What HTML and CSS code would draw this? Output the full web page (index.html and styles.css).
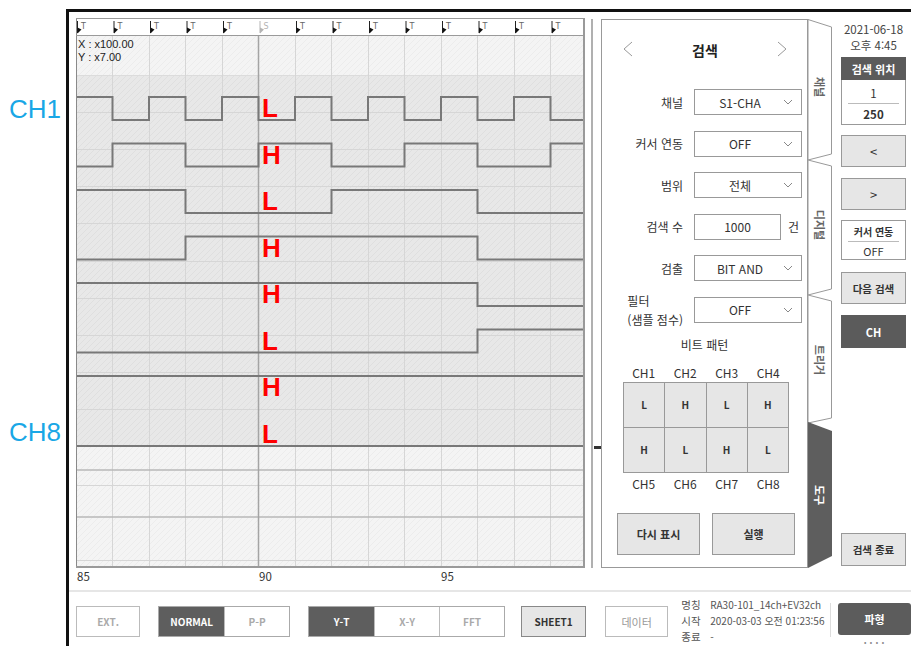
FILE: index.html
```html
<!DOCTYPE html>
<html lang="ko">
<head>
<meta charset="utf-8">
<title>검색</title>
<link rel="stylesheet" href="styles.css">
</head>
<body>
<div class="page">
  <div class="labels">
    <div class="ch-label">CH1</div>
    <div class="ch-label ch8">CH8</div>
  </div>
  <div class="device">
    <div class="main">
      <div class="chart">
        <svg class="chart-svg" width="509" height="572" viewBox="0 0 509 572">
          <defs>
            <pattern id="hd" width="6" height="6" patternUnits="userSpaceOnUse">
              <rect width="6" height="6" fill="#e8e8e8"/>
              <path d="M-1,1 L1,-1 M0,6 L6,0 M5,7 L7,5" stroke="#dfdfdf" stroke-width="1"/>
            </pattern>
            <pattern id="hl" width="6" height="6" patternUnits="userSpaceOnUse">
              <rect width="6" height="6" fill="#f4f4f4"/>
              <path d="M-1,1 L1,-1 M0,6 L6,0 M5,7 L7,5" stroke="#ececec" stroke-width="1"/>
            </pattern>
          </defs>
          <rect x="0" y="0" width="509" height="17" fill="#fff"/>
          <rect x="0" y="17" width="509" height="40" fill="url(#hl)"/>
          <rect x="0" y="57" width="509" height="372" fill="url(#hd)"/>
          <rect x="0" y="429" width="509" height="120" fill="url(#hl)"/>
          <path d="M0,57.5 H509" stroke="#dcdcdc" stroke-width="1"/>
          <g stroke="#d6d6d6" stroke-width="1">
            <path d="M36.5,17 V549 M73.5,17 V549 M109.5,17 V549 M146.5,17 V549 M219.5,17 V549 M255.5,17 V549 M292.5,17 V549 M328.5,17 V549 M365.5,17 V549 M401.5,17 V549 M438.5,17 V549 M474.5,17 V549"/>
            <path d="M0,94.5 H509 M0,131.5 H509 M0,168.5 H509 M0,205.5 H509 M0,243.5 H509 M0,280.5 H509 M0,317.5 H509 M0,354.5 H509 M0,391.5 H509 M0,467.5 H509 M0,542.5 H509"/>
          </g>
          <path d="M0,452 H509 M0,499 H509" stroke="#b8b8b8" stroke-width="1.5"/>
          <path d="M182.5,17 V549" stroke="#a4a4a4" stroke-width="1.5"/>
          <g class="markers">
            <g class="mk-on"><path d="M1.5,3 V15"/><polygon points="1.5,9.5 5.5,11.5 1.5,15.5"/><text x="5" y="10.5">T</text></g>
            <g class="mk-on"><path d="M38,3 V15"/><polygon points="38,9.5 42,11.5 38,15.5"/><text x="41.5" y="10.5">T</text></g>
            <g class="mk-on"><path d="M74.5,3 V15"/><polygon points="74.5,9.5 78.5,11.5 74.5,15.5"/><text x="78" y="10.5">T</text></g>
            <g class="mk-on"><path d="M111,3 V15"/><polygon points="111,9.5 115,11.5 111,15.5"/><text x="114.5" y="10.5">T</text></g>
            <g class="mk-on"><path d="M147.5,3 V15"/><polygon points="147.5,9.5 151.5,11.5 147.5,15.5"/><text x="151" y="10.5">T</text></g>
            <g class="mk-off"><path d="M184,3 V15"/><polygon points="184,9.5 188,11.5 184,15.5"/><text x="187.5" y="10.5">S</text></g>
            <g class="mk-on"><path d="M220.5,3 V15"/><polygon points="220.5,9.5 224.5,11.5 220.5,15.5"/><text x="224" y="10.5">T</text></g>
            <g class="mk-on"><path d="M257,3 V15"/><polygon points="257,9.5 261,11.5 257,15.5"/><text x="260.5" y="10.5">T</text></g>
            <g class="mk-on"><path d="M293.5,3 V15"/><polygon points="293.5,9.5 297.5,11.5 293.5,15.5"/><text x="297" y="10.5">T</text></g>
            <g class="mk-on"><path d="M330,3 V15"/><polygon points="330,9.5 334,11.5 330,15.5"/><text x="333.5" y="10.5">T</text></g>
            <g class="mk-on"><path d="M366.5,3 V15"/><polygon points="366.5,9.5 370.5,11.5 366.5,15.5"/><text x="370" y="10.5">T</text></g>
            <g class="mk-on"><path d="M403,3 V15"/><polygon points="403,9.5 407,11.5 403,15.5"/><text x="406.5" y="10.5">T</text></g>
            <g class="mk-on"><path d="M439.5,3 V15"/><polygon points="439.5,9.5 443.5,11.5 439.5,15.5"/><text x="443" y="10.5">T</text></g>
            <g class="mk-on"><path d="M476,3 V15"/><polygon points="476,9.5 480,11.5 476,15.5"/><text x="479.5" y="10.5">T</text></g>
          </g>
          <text class="xy" x="2" y="30">X : x100.00</text>
          <text class="xy" x="2" y="43">Y : x7.00</text>
          <g class="wave">
            <path d="M0,79 H36.5 V102 H73 V79 H109.5 V102 H146 V79 H182.5 V102 H219 V79 H255.5 V102 H292 V79 H328.5 V102 H365 V79 H401.5 V102 H438 V79 H474.5 V102 H509"/>
            <path d="M0,148.5 H36.5 V125.5 H109.5 V148.5 H182.5 V125.5 H255.5 V148.5 H328.5 V125.5 H401.5 V148.5 H474.5 V125.5 H509"/>
            <path d="M0,172 H109.5 V195 H255.5 V172 H401.5 V195 H509"/>
            <path d="M0,241.5 H109.5 V218.5 H401.5 V241.5 H509"/>
            <path d="M0,265 H401.5 V288 H509"/>
            <path d="M0,334.5 H401.5 V311.5 H509"/>
            <path d="M0,358 H509"/>
            <path d="M0,428 H509"/>
          </g>
          <g class="lv">
            <text x="186" y="99">L</text>
            <text x="186" y="145.5">H</text>
            <text x="186" y="192">L</text>
            <text x="186" y="238.5">H</text>
            <text x="186" y="285">H</text>
            <text x="186" y="331.5">L</text>
            <text x="186" y="378">H</text>
            <text x="186" y="424.5">L</text>
          </g>
          <path d="M0.5,0 V549" stroke="#8a8a8a" stroke-width="1"/>
          <path d="M0,0.5 H509" stroke="#9a9a9a" stroke-width="1"/>
          <path d="M0,17.5 H509" stroke="#9a9a9a" stroke-width="1"/>
          <path d="M508,0 V550" stroke="#9a9a9a" stroke-width="2"/>
          <path d="M0,549 H509" stroke="#9a9a9a" stroke-width="2"/>
          <text class="ax" x="1" y="563">85</text>
          <text class="ax" x="183" y="563">90</text>
          <text class="ax" x="365" y="563">95</text>
        </svg>
      </div>
      <div class="scroll"><div class="thumb"></div></div>
      <div class="panel">
        <div class="phead">
          <svg class="chev" width="10" height="16" viewBox="0 0 10 16"><polyline points="9,1 1,8 9,15"/></svg>
          <div class="ptitle">검색</div>
          <svg class="chev" width="10" height="16" viewBox="0 0 10 16"><polyline points="1,1 9,8 1,15"/></svg>
        </div>
        <div class="form">
          <div class="row"><div class="lbl">채널</div><div class="sel"><span>S1-CHA</span><svg class="dd" width="10" height="6" viewBox="0 0 10 6"><polyline points="1,1 5,5 9,1"/></svg></div></div>
          <div class="row"><div class="lbl">커서 연동</div><div class="sel"><span>OFF</span><svg class="dd" width="10" height="6" viewBox="0 0 10 6"><polyline points="1,1 5,5 9,1"/></svg></div></div>
          <div class="row"><div class="lbl">범위</div><div class="sel"><span>전체</span><svg class="dd" width="10" height="6" viewBox="0 0 10 6"><polyline points="1,1 5,5 9,1"/></svg></div></div>
          <div class="row"><div class="lbl">검색 수</div><div class="inp">1000</div><div class="unit">건</div></div>
          <div class="row"><div class="lbl">검출</div><div class="sel"><span>BIT AND</span><svg class="dd" width="10" height="6" viewBox="0 0 10 6"><polyline points="1,1 5,5 9,1"/></svg></div></div>
          <div class="row"><div class="lbl"><div class="lbl2">필터<br>(샘플 점수)</div></div><div class="sel"><span>OFF</span><svg class="dd" width="10" height="6" viewBox="0 0 10 6"><polyline points="1,1 5,5 9,1"/></svg></div></div>
        </div>
        <div class="bits-title">비트 패턴</div>
        <div class="bits">
          <div class="chrow"><span>CH1</span><span>CH2</span><span>CH3</span><span>CH4</span></div>
          <div class="grid">
            <div class="cell">L</div><div class="cell">H</div><div class="cell">L</div><div class="cell">H</div>
            <div class="cell">H</div><div class="cell">L</div><div class="cell">H</div><div class="cell">L</div>
          </div>
          <div class="chrow low"><span>CH5</span><span>CH6</span><span>CH7</span><span>CH8</span></div>
        </div>
        <div class="pbtns">
          <div class="pbtn">다시 표시</div>
          <div class="pbtn">실행</div>
        </div>
      </div>
      <svg class="tabs" width="25" height="549" viewBox="0 0 25 549">
        <polygon class="tab" points="0,0.5 23.5,8 23.5,135 0,141"/>
        <polygon class="tab" points="0,141 23.5,147 23.5,270 0,276"/>
        <polygon class="tab" points="0,276 23.5,282 23.5,399 0,404"/>
        <polygon class="tab-on" points="0,403 24,412 24,537 0,549"/>
        <text class="tab-t" transform="translate(12,68) rotate(90)">채널</text>
        <text class="tab-t" transform="translate(12,206) rotate(90)">디지털</text>
        <text class="tab-t" transform="translate(12,341) rotate(90)">트리거</text>
        <text class="tab-t on" transform="translate(12,476) rotate(90)">도구</text>
      </svg>
      <div class="side">
        <div class="date">2021-06-18<br>오후 4:45</div>
        <div class="pos">
          <div class="pos-h">검색 위치</div>
          <div class="pos-b">
            <div class="pos-n">1</div>
            <div class="pos-d">250</div>
          </div>
        </div>
        <div class="sbtn gap10">&lt;</div>
        <div class="sbtn gap11">&gt;</div>
        <div class="link">
          <div class="link-t">커서 연동</div>
          <div class="link-v">OFF</div>
        </div>
        <div class="sbtn bold gap12">다음 검색</div>
        <div class="sbtn dark gap11">CH</div>
        <div class="sbtn bold end">검색 종료</div>
      </div>
    </div>
    <div class="bottom">
      <div class="bb single">EXT.</div>
      <div class="bgroup g1">
        <div class="bb on">NORMAL</div>
        <div class="bb">P-P</div>
      </div>
      <div class="bgroup g2">
        <div class="bb on">Y-T</div>
        <div class="bb">X-Y</div>
        <div class="bb">FFT</div>
      </div>
      <div class="bb sheet">SHEET1</div>
      <div class="bb data">데이터</div>
      <div class="info">
        <span class="ik">명칭</span><span class="iv">RA30-101_14ch+EV32ch</span>
        <span class="ik">시작</span><span class="iv">2020-03-03 오전 01:23:56</span>
        <span class="ik">종료</span><span class="iv">-</span>
      </div>
      <div class="divider"></div>
      <div class="wave-col">
        <div class="wavebtn">파형</div>
        <div class="dots">• • • •</div>
      </div>
    </div>
  </div>
</div>
</body>
</html>
```

FILE: styles.css
```css
html, body {
  margin: 0;
  padding: 0;
  background: #fff;
}
body {
  font-family: "Noto Sans CJK KR", "Noto Sans", sans-serif;
  color: #333;
}
.page {
  display: flex;
  width: 911px;
  height: 646px;
  overflow: hidden;
  background: #fff;
}
.labels {
  width: 66px;
  flex: none;
  box-sizing: border-box;
  padding: 96px 0 0 9px;
}
.ch-label {
  font-family: "Liberation Sans", Arial, sans-serif;
  font-size: 26px;
  line-height: 26px;
  height: 26px;
  color: #19a7e6;
}
.ch-label.ch8 {
  margin-top: 297px;
}
.device {
  width: 845px;
  height: 637px;
  flex: none;
  margin-top: 9px;
  box-sizing: border-box;
  border-top: 3px solid #111;
  border-left: 3px solid #111;
  overflow: hidden;
}
.main {
  display: flex;
  align-items: flex-start;
  height: 578px;
  box-sizing: border-box;
  padding: 6px 0 0 7px;
}
.chart {
  width: 509px;
  flex: none;
}
.chart-svg {
  display: block;
}
.mk-on path { stroke: #222; stroke-width: 1; }
.mk-on polygon { fill: #111; }
.mk-on text { fill: #666; }
.mk-off path { stroke: #b4b4b4; stroke-width: 1; }
.mk-off polygon { fill: #b4b4b4; }
.mk-off text { fill: #b4b4b4; }
.markers text {
  font-family: "DejaVu Sans", sans-serif;
  font-size: 8px;
}
.xy {
  font-family: "Liberation Sans", Arial, sans-serif;
  font-size: 11px;
  fill: #222;
}
.wave path {
  fill: none;
  stroke: #787878;
  stroke-width: 2;
}
.lv text {
  font-family: "Liberation Sans", Arial, sans-serif;
  font-weight: bold;
  font-size: 26px;
  fill: #ff0000;
}
.ax {
  font-family: "Noto Sans CJK KR", sans-serif;
  font-size: 11.5px;
  fill: #333;
}
.scroll {
  width: 10px;
  height: 549px;
  flex: none;
  margin: 1px 0 0 6px;
  box-sizing: border-box;
  border-left: 2px solid #b0b0b0;
  padding-top: 427px;
}
.thumb {
  width: 7px;
  height: 3px;
  margin-left: 1px;
  background: #333;
}
.panel {
  width: 207px;
  height: 549px;
  flex: none;
  margin-top: 1px;
  box-sizing: border-box;
  border: 1px solid #999;
  background: #fff;
}
.phead {
  display: flex;
  align-items: center;
  justify-content: space-between;
  height: 58px;
  padding: 0 20px 0 21px;
  margin-top: 0;
}
.chev polyline {
  fill: none;
  stroke: #999;
  stroke-width: 1;
}
.ptitle {
  font-size: 14px;
  font-weight: bold;
  color: #222;
  padding-top: 2px;
}
.form {
  margin-top: 11px;
}
.row {
  display: flex;
  align-items: center;
  height: 26px;
}
.row + .row {
  margin-top: 15.5px;
}
.lbl {
  width: 81px;
  margin-right: 11px;
  text-align: right;
  font-size: 12px;
  color: #333;
  flex: none;
}
.lbl2 {
  display: inline-block;
  text-align: left;
  line-height: 19px;
}
.sel {
  width: 108px;
  height: 26px;
  box-sizing: border-box;
  border: 1px solid #999;
  display: flex;
  align-items: center;
  font-size: 12px;
  color: #333;
}
.sel span {
  flex: 1;
  text-align: center;
  padding-left: 2px;
}
.dd {
  margin-right: 8px;
  flex: none;
}
.dd polyline {
  fill: none;
  stroke: #888;
  stroke-width: 1;
}
.inp {
  width: 87px;
  height: 26px;
  box-sizing: border-box;
  border: 1px solid #999;
  font-size: 12px;
  line-height: 24px;
  text-align: center;
}
.unit {
  margin-left: 7px;
  font-size: 12px;
}
.bits-title {
  margin-top: 14px;
  line-height: 16px;
  font-size: 12px;
  text-align: center;
}
.bits {
  width: 166px;
  margin-left: 21px;
}
.chrow {
  display: grid;
  grid-template-columns: repeat(4, 1fr);
  margin-top: 12px;
  line-height: 16px;
  font-size: 12px;
  text-align: center;
}
.chrow.low {
  margin-top: 3px;
}
.grid {
  display: grid;
  grid-template-columns: repeat(4, 1fr);
  grid-auto-rows: 45px;
  margin-top: 1px;
  border-left: 1px solid #999;
  border-top: 1px solid #999;
}
.cell {
  box-sizing: border-box;
  border-right: 1px solid #999;
  border-bottom: 1px solid #999;
  background: #e6e6e6;
  display: flex;
  align-items: center;
  justify-content: center;
  font-size: 10px;
  font-weight: bold;
  color: #333;
}
.pbtns {
  display: flex;
  gap: 12px;
  margin: 21px 0 0 15px;
}
.pbtn {
  width: 83px;
  height: 42px;
  box-sizing: border-box;
  border: 1px solid #999;
  background: #e6e6e6;
  display: flex;
  align-items: center;
  justify-content: center;
  font-size: 11px;
  font-weight: bold;
  color: #333;
}
.tabs {
  display: block;
  flex: none;
  margin-top: 1px;
}
.tab {
  fill: #fff;
  stroke: #999;
  stroke-width: 1;
}
.tab-on {
  fill: #5e5e5e;
}
.tab-t {
  font-family: "Noto Sans CJK KR", sans-serif;
  font-size: 11px;
  font-weight: bold;
  fill: #666;
  text-anchor: middle;
  dominant-baseline: central;
}
.tab-t.on {
  fill: #fff;
}
.side {
  width: 65px;
  flex: none;
  margin-left: 8px;
  display: flex;
  flex-direction: column;
}
.date {
  margin-top: 3px;
  font-size: 11.5px;
  line-height: 16px;
  text-align: center;
  color: #444;
}
.pos {
  margin-top: 4px;
}
.pos-h {
  height: 23px;
  background: #5b5b5b;
  color: #fff;
  font-size: 11px;
  font-weight: bold;
  display: flex;
  align-items: center;
  justify-content: center;
}
.pos-b {
  height: 45px;
  box-sizing: border-box;
  border: 1px solid #999;
  border-top: none;
  padding: 0 6px;
  text-align: center;
  font-size: 11.5px;
}
.pos-n {
  height: 23px;
  line-height: 26px;
  border-bottom: 1px solid #bbb;
}
.pos-d {
  line-height: 20px;
  font-weight: bold;
}
.sbtn {
  height: 32px;
  box-sizing: border-box;
  border: 1px solid #999;
  background: #e6e6e6;
  display: flex;
  align-items: center;
  justify-content: center;
  font-size: 13px;
  color: #333;
}
.sbtn.bold {
  font-size: 10.5px;
  font-weight: bold;
}
.sbtn.dark {
  background: #5b5b5b;
  border-color: #5b5b5b;
  color: #fff;
  font-size: 11px;
  font-weight: bold;
  height: 33px;
}
.gap10 { margin-top: 10px; }
.gap11 { margin-top: 11px; }
.gap12 { margin-top: 12px; }
.sbtn.end {
  margin-top: 185px;
  height: 33px;
}
.link {
  margin-top: 10px;
  height: 40px;
  box-sizing: border-box;
  border: 1px solid #999;
  padding: 0 6px;
  text-align: center;
}
.link-t {
  height: 20px;
  line-height: 21px;
  font-size: 10px;
  font-weight: bold;
  border-bottom: 1px solid #bbb;
}
.link-v {
  line-height: 18px;
  font-size: 11px;
}
.bottom {
  height: 59px;
  box-sizing: border-box;
  border-top: 2px solid #e6e6e6;
  display: flex;
  align-items: flex-start;
  padding: 14px 0 0 7px;
}
.bb {
  height: 31px;
  box-sizing: border-box;
  display: flex;
  align-items: center;
  justify-content: center;
  font-size: 10px;
  font-weight: bold;
  color: #aaa;
  background: #fff;
}
.bb.single {
  width: 65px;
  border: 1px solid #bbb;
}
.bgroup {
  display: flex;
  border: 1px solid #aaa;
  box-sizing: border-box;
  height: 31px;
}
.bgroup .bb {
  height: 29px;
  width: 65px;
}
.bgroup .bb + .bb {
  border-left: 1px solid #bbb;
}
.bb.on {
  background: #5e5e5e;
  color: #fff;
}
.g1 {
  margin-left: 18px;
}
.g2 {
  margin-left: 18px;
}
.bb.sheet {
  margin-left: 16px;
  width: 66px;
  background: #e6e6e6;
  border: 1px solid #888;
  color: #333;
}
.bb.data {
  margin-left: 19px;
  width: 64px;
  border: 1px solid #bbb;
  color: #999;
  font-weight: normal;
  font-size: 11px;
}
.info {
  margin: -9px 0 0 13px;
  width: 151px;
  display: grid;
  grid-template-columns: 22px auto;
  column-gap: 7px;
  font-size: 10px;
  line-height: 16px;
  color: #555;
  white-space: nowrap;
}
.ik {
  font-size: 10.5px;
}
.divider {
  width: 1px;
  height: 34px;
  margin-top: -3px;
  background: #ddd;
}
.wave-col {
  margin: -3px 0 0 7px;
  width: 73px;
  display: flex;
  flex-direction: column;
  align-items: center;
}
.wavebtn {
  width: 73px;
  height: 32px;
  border-radius: 3px;
  background: #5c5c5c;
  color: #fff;
  font-size: 11px;
  font-weight: bold;
  display: flex;
  align-items: center;
  justify-content: center;
}
.dots {
  font-size: 7px;
  line-height: 10px;
  margin-top: 2px;
  color: #888;
  letter-spacing: 1px;
}
```
